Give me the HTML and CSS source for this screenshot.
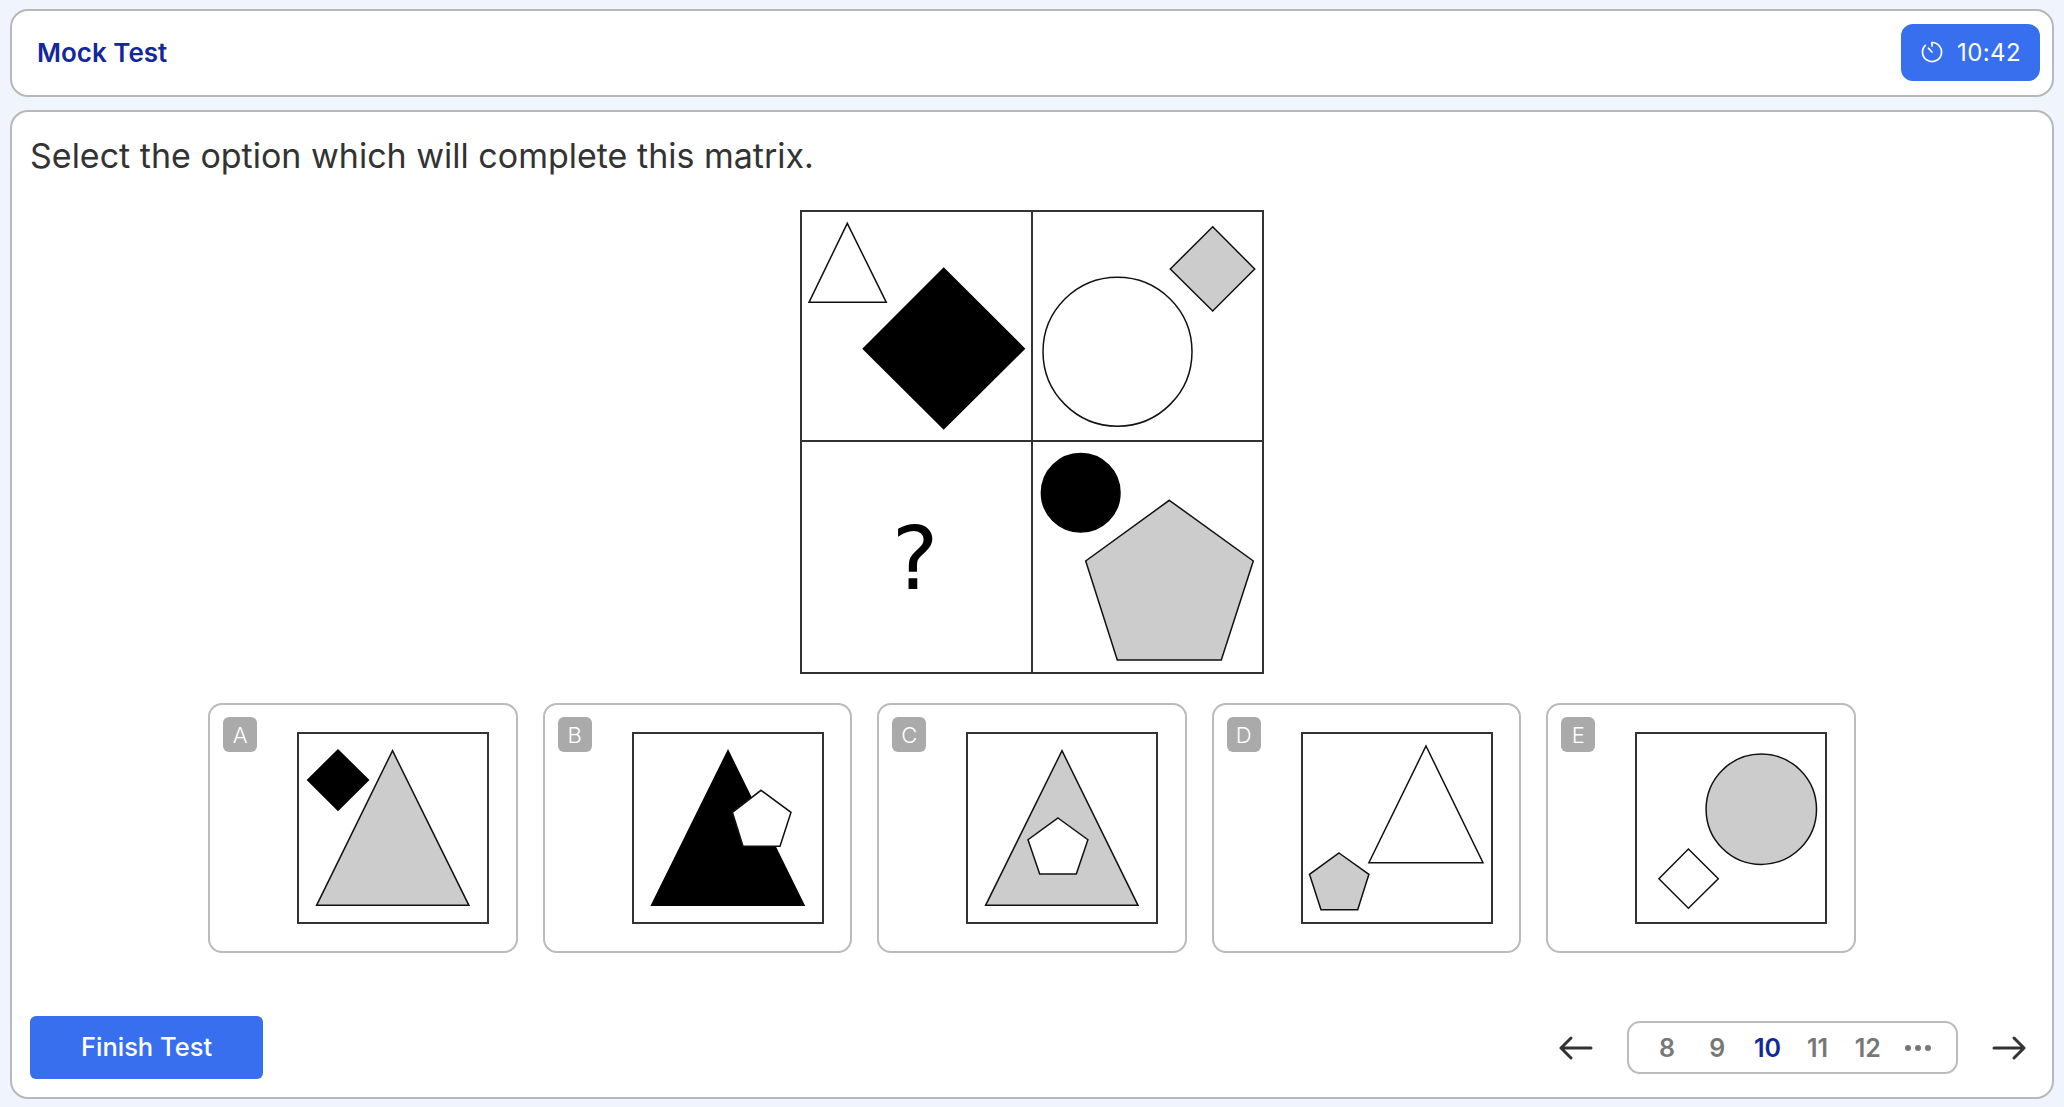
FILE: index.html
```html
<!DOCTYPE html>
<html lang="en">
<head>
    <meta charset="UTF-8">
    <title>Mock Test</title>
    <link rel="stylesheet" href="styles.css">
</head>
<body>
    <header class="top-bar">
        <h1 class="test-title">Mock Test</h1>
        <div class="timer">
            <svg class="timer-icon" viewBox="0 0 24 24">
                <path d="M12 2.5a9.5 9.5 0 1 1-6.7 2.8"/>
                <path d="M12 2.5v3.5"/>
                <path d="M12 12 8.4 8.2"/>
            </svg>
            <span>10:42</span>
        </div>
    </header>

    <main class="test-panel">
        <p class="question">Select the option which will complete this matrix.</p>

        <svg class="matrix" viewBox="0 0 464 464">
            <rect class="grid-line" x="1" y="1" width="462" height="462"/>
            <path class="grid-line" d="M232 1V463M1 231H463"/>
            <polygon class="shape white" points="47.3,13.3 86.3,92.3 9,92.3"/>
            <polygon class="shape black" points="143.7,58.3 224.3,138.7 143.7,218.7 63.3,138.7"/>
            <circle class="shape white" cx="317.5" cy="141.7" r="74.5"/>
            <polygon class="shape gray" points="412.7,16.7 454.7,59 412.7,101 370.3,59"/>
            <circle class="shape black" cx="280.7" cy="282.7" r="39.3"/>
            <polygon class="shape gray" points="369.3,290.3 453.3,351 421.3,450 317.3,450 285.7,351"/>
            <text class="unknown" x="115" y="379">?</text>
        </svg>

        <div class="options">
            <div class="option">
                <span class="option-badge">A</span>
                <svg class="option-figure" viewBox="0 0 192 192">
                    <rect class="grid-line" x="1" y="1" width="190" height="190"/>
                    <polygon class="shape black" points="41,18 71.4,48 41,78.3 10.7,48"/>
                    <polygon class="shape gray" points="95.5,18.7 171.9,173.3 19.6,173.3"/>
                </svg>
            </div>
            <div class="option">
                <span class="option-badge">B</span>
                <svg class="option-figure" viewBox="0 0 192 192">
                    <rect class="grid-line" x="1" y="1" width="190" height="190"/>
                    <polygon class="shape black" points="96,18.7 172,173.3 19.6,173.3"/>
                    <polygon class="shape white" points="129,58.3 159,80.3 148,114.3 111,114.3 100.4,80.3"/>
                </svg>
            </div>
            <div class="option">
                <span class="option-badge">C</span>
                <svg class="option-figure" viewBox="0 0 192 192">
                    <rect class="grid-line" x="1" y="1" width="190" height="190"/>
                    <polygon class="shape gray" points="96,18.7 172,173.3 19.6,173.3"/>
                    <polygon class="shape white" points="92,86 121.9,107.7 110.3,142 73.7,142 62,107.7"/>
                </svg>
            </div>
            <div class="option">
                <span class="option-badge">D</span>
                <svg class="option-figure" viewBox="0 0 192 192">
                    <rect class="grid-line" x="1" y="1" width="190" height="190"/>
                    <polygon class="shape white" points="125,14 182,130.7 67.9,130.7"/>
                    <polygon class="shape gray" points="38,121 67.9,142.3 56.7,177.7 20,177.7 8.5,142.3"/>
                </svg>
            </div>
            <div class="option">
                <span class="option-badge">E</span>
                <svg class="option-figure" viewBox="0 0 192 192">
                    <rect class="grid-line" x="1" y="1" width="190" height="190"/>
                    <circle class="shape gray" cx="126.3" cy="77.2" r="55.2"/>
                    <polygon class="shape white" points="53.4,117 83.3,146.7 53.4,176.3 23.9,146.7"/>
                </svg>
            </div>
        </div>

        <footer class="test-footer">
            <button class="finish-btn">Finish Test</button>
            <nav class="pager">
                <svg class="pager-arrow" viewBox="0 0 34 24">
                    <path d="M32 12H2M12 2 2 12l10 10"/>
                </svg>
                <div class="pager-pages">
                    <span class="page">8</span>
                    <span class="page">9</span>
                    <span class="page active">10</span>
                    <span class="page">11</span>
                    <span class="page">12</span>
                    <span class="page">
                        <svg class="page-dots" viewBox="0 0 26 6">
                            <circle cx="3" cy="3" r="3"/>
                            <circle cx="13" cy="3" r="3"/>
                            <circle cx="23" cy="3" r="3"/>
                        </svg>
                    </span>
                </div>
                <svg class="pager-arrow" viewBox="0 0 34 24">
                    <path d="M2 12H32M22 2l10 10-10 10"/>
                </svg>
            </nav>
        </footer>
    </main>
</body>
</html>
```

FILE: styles.css
```css
* {
    box-sizing: border-box;
}
body {
    font-family: Inter, "Liberation Sans", sans-serif;
    background-color: #f0f5fd;
    color: #333;
    margin: 0;
    padding: 9px 10px 8px;
    height: 100vh;
    display: flex;
    flex-direction: column;
    gap: 13px;
}
.top-bar {
    height: 88px;
    background-color: #fff;
    border: 2px solid #b8b8b8;
    border-radius: 18px;
    padding: 0 12px 2px 25px;
    display: flex;
    align-items: center;
    justify-content: space-between;
}
.test-title {
    margin: 0;
    font-size: 26px;
    font-weight: 600;
    color: #12289b;
}
.timer {
    width: 139px;
    height: 57px;
    background-color: #376fee;
    border-radius: 12px;
    color: #fff;
    font-size: 24px;
    letter-spacing: 0.4px;
    display: flex;
    align-items: center;
    justify-content: center;
    gap: 13px;
}
.timer-icon {
    width: 24px;
    height: 24px;
    fill: none;
    stroke: #fff;
    stroke-width: 1.7;
    stroke-linecap: round;
}
.test-panel {
    flex: 1;
    background-color: #fff;
    border: 2px solid #b8b8b8;
    border-radius: 18px;
    padding: 22px 18px 18px;
    display: flex;
    flex-direction: column;
    align-items: center;
}
.question {
    align-self: flex-start;
    margin: 0;
    font-size: 34px;
    line-height: 44px;
}
.matrix {
    width: 464px;
    height: 464px;
    margin-top: 32px;
}
.grid-line {
    fill: none;
    stroke: #333;
    stroke-width: 2;
}
.shape {
    stroke: #111;
    stroke-width: 1.5;
}
.white {
    fill: #fff;
}
.gray {
    fill: #ccc;
}
.black {
    fill: #000;
    stroke: #000;
}
.unknown {
    font-family: "DejaVu Sans", sans-serif;
    font-size: 88px;
    text-anchor: middle;
    fill: #000;
}
.options {
    display: flex;
    gap: 25px;
    margin-top: 29px;
}
.option {
    position: relative;
    width: 309.5px;
    height: 250px;
    border: 2px solid #bbb;
    border-radius: 14px;
    padding: 27px 26.5px;
    display: flex;
    justify-content: flex-end;
}
.option-badge {
    position: absolute;
    top: 12px;
    left: 13px;
    width: 34px;
    height: 35px;
    background-color: #aaa;
    border-radius: 6px;
    color: #fff;
    font-size: 22px;
    font-weight: 300;
    display: flex;
    align-items: center;
    justify-content: center;
}
.option-figure {
    width: 192px;
    height: 192px;
}
.test-footer {
    align-self: stretch;
    margin-top: auto;
    display: flex;
    align-items: center;
    justify-content: space-between;
}
.finish-btn {
    width: 233px;
    height: 63px;
    background-color: #376fee;
    color: #fff;
    border: none;
    border-radius: 6px;
    padding-bottom: 3px;
    font-family: inherit;
    font-size: 25.5px;
    font-weight: 500;
}
.pager {
    display: flex;
    align-items: center;
    gap: 34px;
    margin-right: 8px;
}
.pager-arrow {
    width: 34px;
    height: 24px;
    fill: none;
    stroke: #333;
    stroke-width: 3;
    stroke-linecap: round;
    stroke-linejoin: round;
}
.pager-pages {
    width: 331px;
    height: 53px;
    border: 2px solid #bbb;
    border-radius: 13px;
    padding: 0 13px;
    display: flex;
    align-items: center;
}
.page {
    width: 50.5px;
    text-align: center;
    font-size: 25px;
    font-weight: 600;
    color: #777;
}
.page.active {
    color: #12289b;
}
.page-dots {
    display: block;
    width: 26px;
    height: 6px;
    margin: 0 auto;
    fill: #777;
}
```
